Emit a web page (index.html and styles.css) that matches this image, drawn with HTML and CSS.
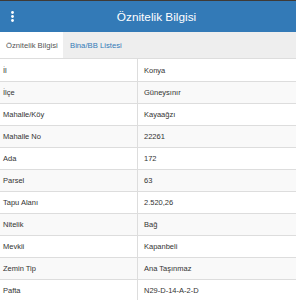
FILE: index.html
```html
<!DOCTYPE html>
<html lang="tr">
<head>
<meta charset="utf-8">
<title>Öznitelik Bilgisi</title>
<link rel="stylesheet" href="styles.css">
</head>
<body>
<div class="topstrip"></div>
<header class="header">
  <div class="menu">
    <svg width="3" height="11" viewBox="0 0 3 11"><circle cx="1.5" cy="1.5" r="1.4" fill="#fff"/><circle cx="1.5" cy="5.5" r="1.4" fill="#fff"/><circle cx="1.5" cy="9.5" r="1.4" fill="#fff"/></svg>
  </div>
  <div class="title">Öznitelik Bilgisi</div>
</header>
<nav class="tabs">
  <div class="tab active">Öznitelik Bilgisi</div>
  <div class="tab link">Bina/BB Listesi</div>
</nav>
<div class="table">
  <div class="row"><div class="key">İl</div><div class="val">Konya</div></div>
  <div class="row alt"><div class="key">İlçe</div><div class="val">Güneysınır</div></div>
  <div class="row"><div class="key">Mahalle/Köy</div><div class="val">Kayaağzı</div></div>
  <div class="row alt"><div class="key">Mahalle No</div><div class="val">22261</div></div>
  <div class="row"><div class="key">Ada</div><div class="val">172</div></div>
  <div class="row alt"><div class="key">Parsel</div><div class="val">63</div></div>
  <div class="row"><div class="key">Tapu Alanı</div><div class="val">2.520,26</div></div>
  <div class="row alt"><div class="key">Nitelik</div><div class="val">Bağ</div></div>
  <div class="row"><div class="key">Mevkii</div><div class="val">Kapanbeli</div></div>
  <div class="row alt"><div class="key">Zemin Tip</div><div class="val">Ana Taşınmaz</div></div>
  <div class="row"><div class="key">Pafta</div><div class="val">N29-D-14-A-2-D</div></div>
</div>
</body>
</html>
```
FILE: styles.css
```css
html, body {
  margin: 0;
  padding: 0;
  background: #fff;
  font-family: "Liberation Sans", Arial, sans-serif;
  color: #333;
  overflow: hidden;
}
.topstrip {
  height: 1px;
  background: #3f3a36;
}
.header {
  height: 31px;
  background: #337ab7;
  display: flex;
  align-items: center;
}
.menu {
  display: flex;
  align-items: center;
  padding-left: 11px;
  width: 3px;
}
.menu svg {
  display: block;
}
.title {
  flex: 1;
  text-align: center;
  padding-left: 3px;
  color: #fff;
  font-size: 11.8px;
}
.tabs {
  height: 26px;
  background: #eee;
  border-bottom: 1px solid #ddd;
  display: flex;
  align-items: stretch;
  font-size: 7.7px;
}
.tab {
  display: flex;
  align-items: center;
}
.tab.active {
  background: #fff;
  color: #555;
  width: 63px;
  padding-left: 6px;
  box-sizing: border-box;
  padding-top: 1px;
}
.tab.link {
  color: #337ab7;
  padding-left: 7px;
  padding-top: 1px;
}
.table {
  font-size: 7.5px;
}
.row {
  display: flex;
  height: 22px;
  box-sizing: border-box;
}
.row + .row {
  border-top: 1px solid #ddd;
}
.row.alt {
  background: #f9f9f9;
}
.key {
  width: 138px;
  box-sizing: border-box;
  border-right: 1px solid #ddd;
  padding-left: 3px;
  display: flex;
  align-items: center;
}
.val {
  flex: 1;
  padding-left: 6px;
  display: flex;
  align-items: center;
}
```
